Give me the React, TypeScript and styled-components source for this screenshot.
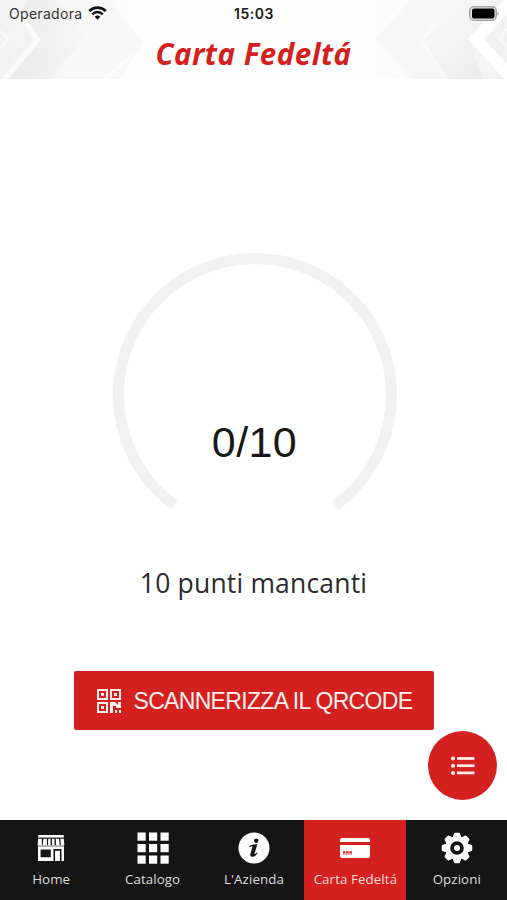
import React from "react";
import styled, { createGlobalStyle } from "styled-components";

const RED = "#d52020";

const GlobalStyle = createGlobalStyle`
  * { box-sizing: border-box; }
  body { margin: 0; background: #fff; }
`;

const Screen = styled.div`
  width: 507px;
  height: 900px;
  display: flex;
  flex-direction: column;
  overflow: hidden;
  background: #fefefe;
  color: #222;
  font-family: "Open Sans", sans-serif;
`;

const Header = styled.header`
  position: relative;
  height: 79px;
  flex: none;
  display: flex;
  flex-direction: column;
`;

const HeaderArt = styled.svg`
  position: absolute;
  inset: 0;
`;

const StatusBar = styled.div`
  position: relative;
  height: 28px;
  padding: 0 7px 0 9px;
  display: grid;
  grid-template-columns: 1fr auto 1fr;
  align-items: center;
  font-family: Inter, sans-serif;
  font-size: 14px;
  line-height: 28px;
`;

const Carrier = styled.div`
  display: flex;
  align-items: center;
  gap: 6px;
  letter-spacing: 0.3px;
  color: #333;
  svg { margin-top: -2px; }
`;

const Clock = styled.div`
  font-weight: 600;
  font-size: 14px;
  letter-spacing: 0.5px;
  margin-right: 1px;
  color: #1a1a1a;
`;

const Battery = styled.svg`
  justify-self: end;
  margin-top: -2px;
`;

const Title = styled.h1`
  position: relative;
  margin: 0;
  text-align: center;
  color: ${RED};
  font-size: 29.5px;
  font-style: italic;
  font-weight: 700;
  line-height: 40px;
  padding-top: 6px;
  letter-spacing: 0.5px;
`;

const Main = styled.main`
  flex: 1;
  display: flex;
  flex-direction: column;
  align-items: center;
  padding-top: 169px;
  background: #fff;
`;

const Gauge = styled.div`
  width: 296px;
  height: 268px;
  display: grid;
  margin-left: 2px;
  > * { grid-area: 1 / 1; }
`;

const Score = styled.div`
  justify-self: center;
  padding-top: 169px;
  font: 43px/50px "Liberation Sans", sans-serif;
  letter-spacing: 0.4px;
  color: #181818;
`;

const Missing = styled.p`
  margin: 47px 0 0;
  font-size: 26.5px;
  line-height: 40px;
  letter-spacing: 0.18px;
  color: #2b2b2b;
`;

const ScanButton = styled.button`
  width: 360px;
  height: 59px;
  margin: 68px 0 0;
  padding: 0 0 0 23px;
  flex: none;
  border: 0;
  border-radius: 2px;
  display: flex;
  align-items: center;
  gap: 13px;
  background: ${RED};
  color: #fff0ee;
  font: 23px/30px "Liberation Sans", sans-serif;
  letter-spacing: -0.68px;
  white-space: nowrap;
`;

const ListButton = styled.button`
  width: 69px;
  height: 69px;
  flex: none;
  margin: 1px 10px 0 0;
  align-self: flex-end;
  padding: 0;
  border: 0;
  border-radius: 50%;
  display: grid;
  place-items: center;
  background: ${RED};
`;

const TabBar = styled.nav`
  height: 80.5px;
  flex: none;
  display: grid;
  grid-template-columns: repeat(5, 1fr);
  background: #151515;
`;

const Tab = styled.a<{ $active?: boolean }>`
  display: flex;
  flex-direction: column;
  align-items: center;
  padding: 12.5px 0 0 1px;
  gap: 2px;
  background: ${(p) => (p.$active ? RED : "transparent")};
  color: ${(p) => (p.$active ? "#ffdcda" : "#ddd")};
  font-size: 13.3px;
  line-height: 26px;
  letter-spacing: 0.1px;
  white-space: nowrap;
`;

const HeaderPattern = () => (
  <HeaderArt width="507" height="79" viewBox="0 0 507 79">
    <defs>
      <linearGradient id="sheet">
        <stop offset="0" stopColor="#f2f2f2" />
        <stop offset=".14" stopColor="#f6f6f6" />
        <stop offset=".27" stopColor="#fdfdfd" />
        <stop offset=".7" stopColor="#fdfdfd" />
        <stop offset=".86" stopColor="#f8f8f8" />
        <stop offset="1" stopColor="#f2f2f2" />
      </linearGradient>
      <linearGradient id="bandLeft" x1="0" x2="1">
        <stop offset="0" stopColor="#ebebeb" />
        <stop offset="1" stopColor="#f6f6f6" />
      </linearGradient>
      <linearGradient id="bandRight" x1="0" x2="1" y2="1">
        <stop offset="0" stopColor="#fafafa" />
        <stop offset="1" stopColor="#ebebeb" />
      </linearGradient>
    </defs>
    <path fill="url(#sheet)" d="M0 0h507v79H0z" />
    <path fill="url(#bandLeft)" d="M28 0h27l32 37-40 42H10l30-38L19 14z" />
    <path fill="#f8f8f8" d="M62 0l25 36-35 43h67l24-37-34-42z" />
    <path fill="none" stroke="#fbfbfb" strokeWidth="5" d="M20 14l18 26L4 79" />
    <path fill="none" stroke="#fafafa" strokeWidth="2" d="M0 31l8 8-8 9" />
    <path fill="none" stroke="#fcfcfc" strokeWidth="3" d="M132 55l-27 24" />
    <path fill="#f7f7f7" d="M412 0l-36 39 38 40h31l-23-39 36-40z" />
    <path fill="url(#bandRight)" d="M462 0l-40 40 27 39h34l-14-39 31-35z" />
    <path fill="none" stroke="#fcfcfc" strokeWidth="4" d="M406 0l-34 39 32 40" />
    <path fill="none" stroke="#fbfbfb" strokeWidth="2" d="M435 25l-13 15 7 12" />
    <path fill="none" stroke="#fff" strokeWidth="12" d="M511 1l-35 38 38 42" />
    <path fill="none" stroke="#fafafa" strokeWidth="2" d="M507 29l-7 10 7 9" />
  </HeaderArt>
);

const WifiIcon = () => (
  <svg width="19" height="14" viewBox="0 0 19 14" fill="none" stroke="#111">
    <path strokeWidth="2.8" d="M1.2 5.1a11.8 11.8 0 0 1 16.6 0" />
    <path strokeWidth="2.5" d="M4.2 8.3a7.5 7.5 0 0 1 10.6 0" />
    <path fill="#111" stroke="none" d="M6.7 10.8a4 4 0 0 1 5.6 0l-2.8 3z" />
  </svg>
);

const BatteryIcon = () => (
  <Battery width="31" height="15" viewBox="0 0 31 15">
    <rect x=".75" y=".75" width="26.5" height="13.5" rx="4" fill="#e4e4e4" stroke="#a7a7a7" strokeWidth="1.5" />
    <rect x="3" y="2.5" width="22.5" height="10" rx="2" />
    <path d="M28.5 5q2.5 2.5 0 5z" fill="#aaa" />
  </Battery>
);

const QrIcon = () => (
  <svg width="24" height="24" viewBox="0 0 24 24" fill="#fff0ee">
    <path
      fillRule="evenodd"
      d="M0 0h11v11H0zM2 2v7h7V2zM13 0h11v11H13zM15 2v7h7V2zM0 13h11v11H0zM2 15v7h7v-7z"
    />
    <path d="M4 4h3v3H4zM17 4h3v3h-3zM4 17h3v3H4zM13 13h5l3 3v-3h3v6h-5v-2h-3v7h-3zM18 21h2v3h-2zM22 21h2v3h-2z" />
  </svg>
);

const ListIcon = () => (
  <svg width="24" height="20" viewBox="0 0 24 20" fill="#fff0ee">
    {[2.5, 9.7, 16.9].map((y) => (
      <g key={y}>
        <circle cx="2" cy={y} r="2" />
        <rect x="6" y={y - 1.35} width="17.5" height="2.7" />
      </g>
    ))}
  </svg>
);

const HomeIcon = () => (
  <svg width="32" height="32" viewBox="0 0 32 32" fill="#fff">
    <path d="M3.2 3h25.6v2.6H3.2z" />
    <path d="M3.2 6.8h3.6v6.4H2.6zM8.4 6.8h3.5v6.4H7.6zM13.2 6.8h2.4v6.4H13zM17 6.8h2.4l.2 6.4h-2.6zM20.8 6.8h3.3l.6 6.4h-3.7zM25.3 6.8h3.5l.6 6.4h-3.5z" />
    <path opacity=".6" d="M3 13h26v1.6H3z" />
    <path fillRule="evenodd" d="M3 14.5h26V29H3zM5.6 17.5v7.8h10.2v-7.8zM18.5 17v12h1.6V18.8h4.8V29h1.6V17z" />
  </svg>
);

const GridIcon = () => (
  <svg width="32" height="32" viewBox="0 0 32 32" fill="#fff">
    {[0.5, 12, 23.5].map((y) =>
      [0.5, 12, 23.5].map((x) => <rect key={`${x}-${y}`} x={x} y={y} width="8.2" height="8.2" />)
    )}
  </svg>
);

const InfoIcon = () => (
  <svg width="32" height="32" viewBox="0 0 32 32">
    <circle cx="16" cy="16" r="15.5" fill="#fff" />
    <circle cx="18.2" cy="8.7" r="2.2" fill="#151515" />
    <path fill="none" stroke="#151515" strokeLinecap="round" d="M12 14.4q2.5-1.3 5-1.3" strokeWidth="1.4" />
    <path fill="#151515" d="M14.8 12.9l4.6-.8-2.8 9.4c-.3 1 .5.8 2.3-1l.8.6c-2 2.9-4 4-5.9 3.7-1.6-.3-1.8-1.5-1.3-3z" />
  </svg>
);

const CardIcon = () => (
  <svg width="32" height="32" viewBox="0 0 32 32">
    <path fill="#fff" d="M3 6h26q2 0 2 2v2H1V8q0-2 2-2zM1 13h30v11q0 2-2 2H3q-2 0-2-2z" />
    <path stroke={RED} strokeWidth="1.7" strokeDasharray="2.5 .7" d="M4 20.2h9.5" />
    <path stroke={RED} strokeWidth="1.2" strokeDasharray="1.8 .7" d="M4 22h9" />
  </svg>
);

const GearIcon = () => (
  <svg width="32" height="32" viewBox="0 0 32 32">
    <circle cx="16" cy="16" r="11.7" fill="#fff" />
    {[0, 45, 90, 135, 180, 225, 270, 315].map((a) => (
      <path key={a} fill="#fff" transform={`rotate(${a} 16 16)`} d="M11.5 6l1.3-4q.4-1.3 1.5-1.3h3.4q1.1 0 1.5 1.3l1.3 4z" />
    ))}
    <circle cx="16" cy="16" r="4.9" fill="none" stroke="#151515" strokeWidth="3.8" />
  </svg>
);

const tabs = [
  { label: "Home", Icon: HomeIcon },
  { label: "Catalogo", Icon: GridIcon },
  { label: "L'Azienda", Icon: InfoIcon },
  { label: "Carta Fedeltá", Icon: CardIcon, active: true },
  { label: "Opzioni", Icon: GearIcon },
];

export default function App() {
  return (
    <>
      <GlobalStyle />
      <Screen>
        <Header>
          <HeaderPattern />
          <StatusBar>
            <Carrier>
              Operadora <WifiIcon />
            </Carrier>
            <Clock>15:03</Clock>
            <BatteryIcon />
          </StatusBar>
          <Title>Carta Fedeltá</Title>
        </Header>
        <Main>
          <Gauge>
            <svg width="296" height="268" viewBox="0 0 296 268">
              <path
                d="M67.8 257.4A136.5 136.5 0 1 1 228.2 257.4"
                fill="none"
                stroke="#f2f2f2"
                strokeWidth="11"
              />
            </svg>
            <Score>0/10</Score>
          </Gauge>
          <Missing>10 punti mancanti</Missing>
          <ScanButton>
            <QrIcon />
            SCANNERIZZA IL QRCODE
          </ScanButton>
          <ListButton aria-label="Elenco">
            <ListIcon />
          </ListButton>
        </Main>
        <TabBar>
          {tabs.map(({ label, Icon, active }) => (
            <Tab key={label} $active={active}>
              <Icon />
              {label}
            </Tab>
          ))}
        </TabBar>
      </Screen>
    </>
  );
}
